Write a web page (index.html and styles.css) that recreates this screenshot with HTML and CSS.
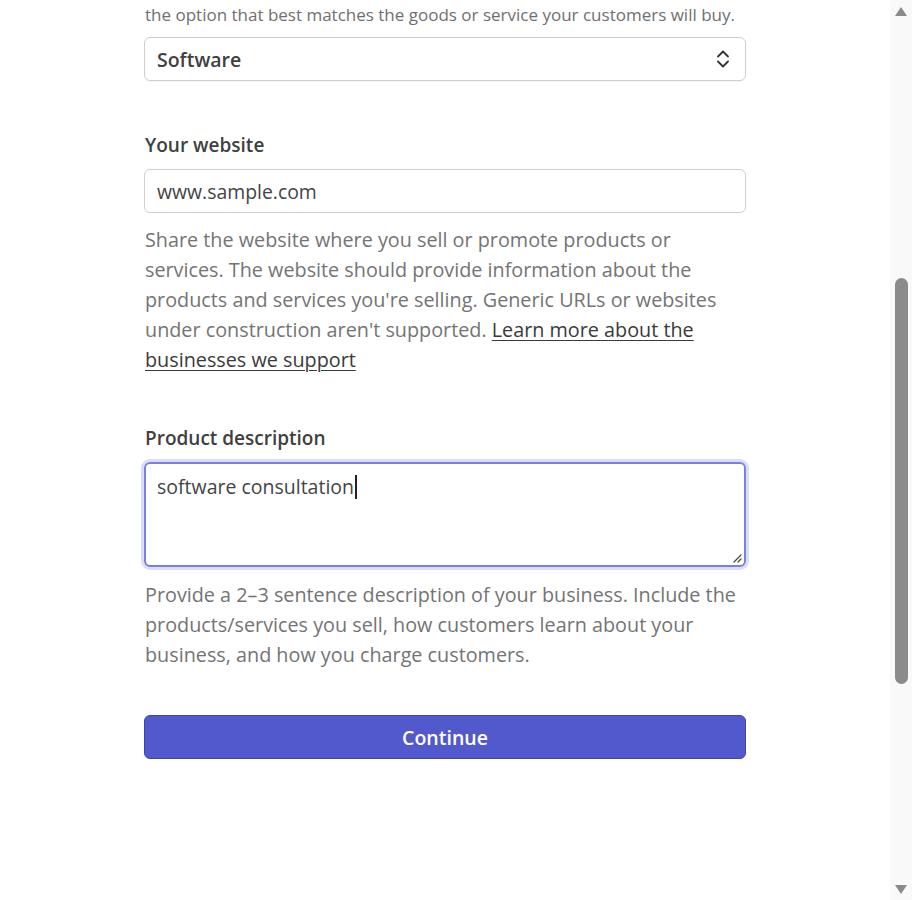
FILE: index.html
```html
<!DOCTYPE html>
<html lang="en">
<head>
<meta charset="utf-8">
<title>Business details</title>
<link rel="stylesheet" href="styles.css">
</head>
<body>
<div class="viewport">
  <main class="form">
    <p class="intro">Your industry helps us understand your business. If unsure, choose<br>the option that best matches the goods or service your customers will buy.</p>
    <div class="select">
      <span class="select-value">Software</span>
      <svg class="select-icon" width="16" height="20" viewBox="0 0 16 20" aria-hidden="true">
        <path d="M3 7.5 L8 2.5 L13 7.5" fill="none" stroke="#333" stroke-width="1.8" stroke-linecap="round" stroke-linejoin="round"/>
        <path d="M3 12.5 L8 17.5 L13 12.5" fill="none" stroke="#333" stroke-width="1.8" stroke-linecap="round" stroke-linejoin="round"/>
      </svg>
    </div>

    <label class="field-label field-label-first" for="website">Your website</label>
    <input class="text-input" id="website" type="text" value="www.sample.com" readonly>
    <p class="help">Share the website where you sell or promote products or services. The website should provide information about the products and services you're selling. Generic URLs or websites under construction aren't supported. <a class="help-link" href="#">Learn more about the businesses we support</a></p>

    <div class="field-label">Product description</div>
    <div class="textarea">
      <span class="textarea-text">software consultation</span><span class="caret"></span>
      <svg class="grip" width="10" height="10" viewBox="0 0 10 10" aria-hidden="true">
        <path d="M9 2 L2 9 M9 6 L6 9" stroke="#444" stroke-width="1.2" stroke-linecap="round"/>
      </svg>
    </div>
    <p class="help help-second">Provide a 2–3 sentence description of your business. Include the products/services you sell, how customers learn about your business, and how you charge customers.</p>

    <button class="continue" type="button">Continue</button>
  </main>
</div>
<div class="scrollbar" aria-hidden="true">
  <div class="sb-arrow sb-up"></div>
  <div class="sb-track"><div class="sb-thumb"></div></div>
  <div class="sb-arrow sb-down"></div>
</div>
</body>
</html>
```
FILE: styles.css
```css
html, body {
  margin: 0;
  padding: 0;
  height: 900px;
  overflow: hidden;
  background: #ffffff;
}

body {
  font-family: "Open Sans", "Noto Sans", sans-serif;
  color: #3d3d3d;
}

.viewport {
  padding-right: 22px;
}

.form {
  width: 602px;
  margin: 0 auto;
  display: flex;
  flex-direction: column;
}

.intro {
  margin: -30px 0 0 1px;
  font-size: 17px;
  line-height: 30px;
  color: #6f6f6f;
  white-space: nowrap;
}

.select {
  margin-top: 7px;
  height: 44px;
  box-sizing: border-box;
  border: 1px solid #cfcfcf;
  border-radius: 6px;
  padding: 0 14px 0 12px;
  display: flex;
  align-items: center;
  justify-content: space-between;
  box-shadow: 0 1px 1px rgba(0,0,0,0.04);
}

.select-value {
  font-size: 19.5px;
  font-weight: 600;
  color: #404040;
}

.select-icon {
  display: block;
}

.field-label {
  margin: 48px 0 0 1px;
  font-size: 19px;
  line-height: 30px;
  font-weight: 600;
  color: #404040;
}

.field-label-first {
  margin-top: 49px;
}

.text-input {
  margin-top: 9px;
  height: 44px;
  box-sizing: border-box;
  border: 1px solid #d0d0d0;
  border-radius: 6px;
  padding: 0 12px;
  font-family: inherit;
  font-size: 19.4px;
  color: #444444;
  background: #fff;
  outline: none;
}

.help {
  margin: 12px 0 0 1px;
  font-size: 19.8px;
  line-height: 30px;
  color: #747474;
}

.help-second {
  margin-top: 13px;
}

.help-link {
  color: #3a3a3a;
  text-decoration: underline;
  text-underline-offset: 3px;
  text-decoration-thickness: 1px;
}

.textarea {
  position: relative;
  margin-top: 9px;
  height: 105px;
  box-sizing: border-box;
  border: 2px solid #7a7fe0;
  border-radius: 6px;
  box-shadow: 0 0 0 3px #dcdef9;
  padding: 9px 11px;
  font-size: 19.5px;
  line-height: 28px;
  color: #444444;
}

.caret {
  display: inline-block;
  width: 2px;
  height: 24px;
  background: #222;
  vertical-align: -5px;
  margin-left: 1px;
}

.grip {
  position: absolute;
  right: 2px;
  bottom: 2px;
}

.continue {
  margin-top: 45px;
  height: 44px;
  box-sizing: border-box;
  border: 1px solid #3f45ad;
  border-radius: 6px;
  background: #5259cc;
  color: #ffffff;
  font-family: inherit;
  font-size: 19.5px;
  font-weight: 600;
  cursor: pointer;
}

.scrollbar {
  position: fixed;
  top: 0;
  right: 0;
  width: 22px;
  height: 900px;
  background: #f9f9f9;
  display: flex;
  flex-direction: column;
  align-items: center;
}

.sb-arrow {
  width: 0;
  height: 0;
  border-left: 6px solid transparent;
  border-right: 6px solid transparent;
}

.sb-up {
  margin-top: 7px;
  border-bottom: 9px solid #8a8a8a;
}

.sb-down {
  margin-bottom: 6px;
  border-top: 9px solid #8a8a8a;
}

.sb-track {
  flex: 1;
  width: 100%;
  display: flex;
  justify-content: center;
}

.sb-thumb {
  margin-top: 262px;
  width: 13px;
  height: 406px;
  border-radius: 7px;
  background: #8b8b8b;
}
```
